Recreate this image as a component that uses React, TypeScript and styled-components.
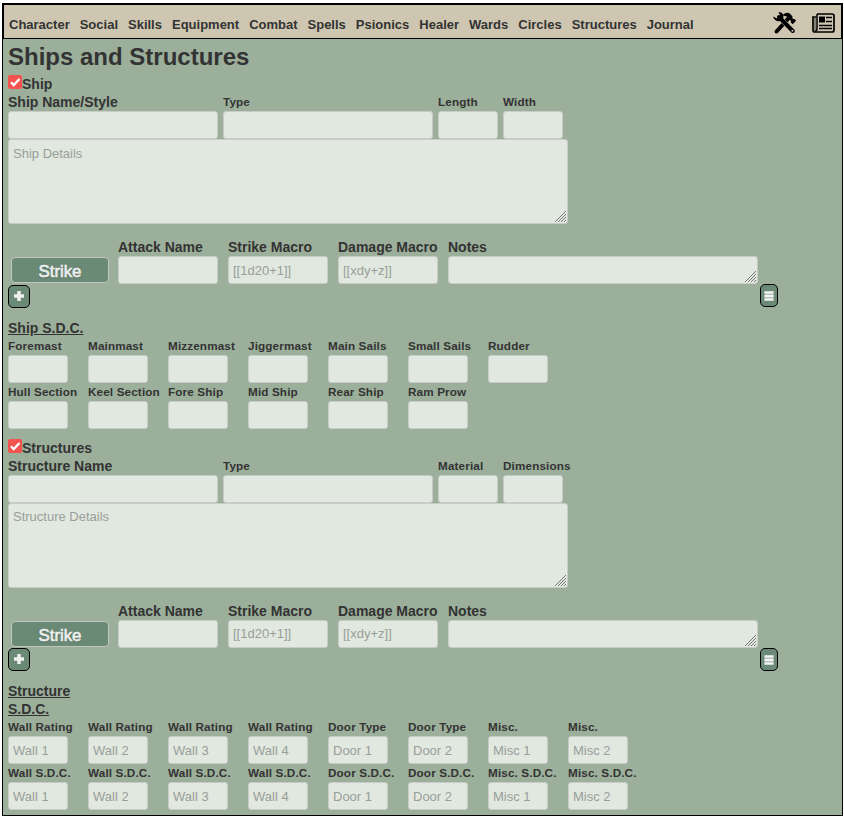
import React from "react";
import styled, { createGlobalStyle } from "styled-components";

const Global = createGlobalStyle`
  *, *::before, *::after { box-sizing: border-box; }
  body { margin: 0; background: #fff; color: #333; font: bold 14px/18px "Liberation Sans", Arial, sans-serif; }
`;
const Sheet = styled.main`
  width: 841px;
  height: 813px;
  margin: 3px 0 0 2px;
  border: 1px solid #000;
  background: #9caf9b;
`;
const Header = styled.header`
  display: flex;
  align-items: center;
  height: 35px;
  border: 1px solid #000;
  padding: 6px 6px 0 5px;
  background: #cec6b0;
  font-size: 13px;
`;
const Nav = styled.nav`
  display: flex;
  gap: 10px;
  flex: 1;
  padding-top: 1px;
`;
const Tab = styled.a`
  white-space: nowrap;
`;
const HeaderIcons = styled.div`
  display: flex;
  align-items: center;
  gap: 15px;
  height: 24px;
  margin-top: -4px;
  color: #000;
  svg { display: block; }
`;
const Content = styled.div`
  padding: 0 5px;
`;
const Title = styled.h1`
  margin: 0;
  height: 36px;
  font-size: 24px;
  line-height: 36px;
`;
const Section = styled.section<{ $height: number }>`
  height: ${(p) => p.$height}px;
`;
const Toggle = styled.label`
  display: flex;
  height: 18px;
`;
const Check = styled.span`
  width: 14px;
  height: 14px;
  border-radius: 2px;
  background: #f4544f;
  svg { display: block; }
`;
const Row = styled.div<{ $gap: number }>`
  display: flex;
  gap: ${(p) => p.$gap}px;
`;
const Field = styled.label<{ $w: number; $small?: boolean }>`
  display: block;
  width: ${(p) => p.$w}px;
  flex: none;
  white-space: nowrap;
  font-size: ${(p) => (p.$small ? 11.7 : 14)}px;
  letter-spacing: ${(p) => (p.$small ? 0.14 : 0)}px;
`;
const Input = styled.input`
  display: block;
  width: 100%;
  height: 28px;
  padding: 4px;
  border: 1px solid #c8cbc8;
  border-radius: 3px;
  background: #e1e8e0;
  color: #555;
  font: 13px/18px "Liberation Sans", Arial, sans-serif;
  letter-spacing: 0;
  &::placeholder { color: #999e99; opacity: 1; }
`;
const Area = styled(Input).attrs({ as: "textarea" })<{ $w: number; $h: number }>`
  width: ${(p) => p.$w}px;
  height: ${(p) => p.$h}px;
  padding: 4.6px 4px;
  resize: both;
  overflow: auto;
  &::-webkit-resizer {
    background: linear-gradient(135deg, transparent 7.2px, #777 7.2px 8.2px, transparent 8.2px 9.3px, #777 9.3px 10.3px, transparent 10.3px 11.4px, #777 11.4px 12.4px, transparent 12.4px 13.5px, #777 13.5px 14.5px, transparent 14.5px) right 1px bottom 1px / 11px 11px no-repeat;
  }
`;
const AttackRow = styled.div`
  display: flex;
  gap: 10px;
  margin-top: 14px;
`;
const Strike = styled.button`
  width: 98px;
  height: 26px;
  margin: 19px -1px 0 3px;
  padding: 3px 0 0;
  border: 1px solid #bfc7bf;
  border-radius: 4px;
  background: #6b8a76;
  color: #eee;
  font: 16.8px/22px "Liberation Sans", Arial, sans-serif;
  -webkit-text-stroke: 0.6px #eee;
  text-shadow: 0 1px 2px #52695a;
`;
const Controls = styled.div`
  display: flex;
  justify-content: space-between;
  width: 770px;
`;
const IconButton = styled.button<{ $w: number; $top?: number }>`
  display: flex;
  align-items: center;
  justify-content: center;
  width: ${(p) => p.$w}px;
  height: 23px;
  margin-top: ${(p) => p.$top ?? 0}px;
  padding: ${(p) => (p.$top ? "0 0 1px" : "1px 0 0")};
  border: 1px solid #000;
  border-radius: 5px;
  background: #6b8a76;
  color: #eee;
`;
const Subheading = styled.h2`
  width: 80px;
  margin: 0;
  padding-top: 11px;
  font-size: 14px;
  line-height: 18px;
  text-decoration: underline;
`;

const ToolsIcon = () => (
  <svg width="24" height="24" viewBox="0 0 24 24">
    <path d="M3.5 20.5 15 8" stroke="currentColor" strokeWidth="4" strokeLinecap="round" />
    <path d="m6 6 14 14" stroke="#cec6b0" strokeWidth="5" />
    <path d="m6 6 13.8 14" stroke="currentColor" strokeWidth="4" strokeLinecap="round" />
    <path fill="currentColor" d="M5.5 1c4 .2 6 3 4.5 7L8 10C4 11 1 9 0 5.5l4 2 2.7-1.2V3.5z" />
    <path fill="currentColor" d="M9.5 4.3C12 1.5 15 1 17.5 3.3l2 2.2-.2 1.6 1 1 1.3-.2L23 9.7l-3.3 3.5-1.9-1.8.2-1.5-1.5-1.4-2.5 2.2-2-2.4 2.3-2.5z" />
    <circle cx="19.4" cy="19.8" r="1" fill="#cec6b0" />
  </svg>
);
const NewsIcon = () => (
  <svg width="23" height="20" viewBox="0 0 23 20" fill="none" stroke="currentColor">
    <path d="M5 1h15q2 0 2 2v14q0 2-2 2H3q-2 0-2-2V4h3.5" strokeWidth="1.7" />
    <path d="M5 1v15q0 2-2 2" strokeWidth="1.5" />
    <path d="M3 5v12" strokeWidth=".7" />
    <path d="M7 3.5h6v6H7z" fill="currentColor" stroke="none" />
    <path d="M14 4.5h6M14 8.5h6M7 12.5h13M7 15.5h13" strokeWidth="1.4" />
  </svg>
);
const CheckIcon = () => (
  <svg width="14" height="14" viewBox="0 0 14 14">
    <path d="m3 7.3 2.7 2.8L11.5 4" fill="none" stroke="#fff" strokeWidth="2.3" />
  </svg>
);
const PlusIcon = () => (
  <svg width="12" height="12" viewBox="0 0 12 12">
    <path d="M6 1v10M1 6h10" stroke="currentColor" strokeWidth="3.5" />
  </svg>
);
const ListIcon = () => (
  <svg width="10" height="10" viewBox="0 0 10 10">
    <path fill="#b5c3ba" d="M.5 0h9v10h-9z" />
    <path d="M.5 1.5h9M.5 5h9M.5 8.5h9" stroke="#f2f3f2" strokeWidth="2" />
  </svg>
);

const tabs = ["Character", "Social", "Skills", "Equipment", "Combat", "Spells", "Psionics", "Healer", "Wards", "Circles", "Structures", "Journal"];
const shipParts = [
  ["Foremast", "Mainmast", "Mizzenmast", "Jiggermast", "Main Sails", "Small Sails", "Rudder"],
  ["Hull Section", "Keel Section", "Fore Ship", "Mid Ship", "Rear Ship", "Ram Prow"],
];
const structureParts = ["Wall 1", "Wall 2", "Wall 3", "Wall 4", "Door 1", "Door 2", "Misc 1", "Misc 2"];
const partKind = (part: string) => part.replace(/ \d/, "").replace("Misc", "Misc.");
const ratingLabel = (part: string) => {
  const kind = partKind(part);
  return kind === "Wall" ? "Wall Rating" : kind === "Door" ? "Door Type" : kind;
};

function Details({ toggle, labels, placeholder }: { toggle: string; labels: string[]; placeholder: string }) {
  return (
    <>
      <Toggle><Check><CheckIcon /></Check>{toggle}</Toggle>
      <Row $gap={5}>
        {labels.map((label, i) => (
          <Field key={label} $w={i < 2 ? 210 : 60} $small={i > 0}>{label}<Input /></Field>
        ))}
      </Row>
      <Area $w={560} $h={85} placeholder={placeholder} />
    </>
  );
}

function Attacks() {
  return (
    <>
      <AttackRow>
        <Strike>Strike</Strike>
        <Field $w={100}>Attack Name<Input /></Field>
        <Field $w={100}>Strike Macro<Input placeholder="[[1d20+1]]" /></Field>
        <Field $w={100}>Damage Macro<Input placeholder="[[xdy+z]]" /></Field>
        <Field $w={310}>Notes<Area $w={310} $h={28} /></Field>
      </AttackRow>
      <Controls>
        <IconButton $w={22} $top={0.8} aria-label="Add attack"><PlusIcon /></IconButton>
        <IconButton $w={18} aria-label="Modify attacks"><ListIcon /></IconButton>
      </Controls>
    </>
  );
}

export default function App() {
  return (
    <>
      <Global />
      <Sheet>
        <Header>
          <Nav>{tabs.map((tab) => <Tab key={tab}>{tab}</Tab>)}</Nav>
          <HeaderIcons><ToolsIcon /><NewsIcon /></HeaderIcons>
        </Header>
        <Content>
          <Title>Ships and Structures</Title>
          <Section $height={363.6}>
            <Details toggle="Ship" labels={["Ship Name/Style", "Type", "Length", "Width"]} placeholder="Ship Details" />
            <Attacks />
            <Subheading>Ship S.D.C.</Subheading>
            {shipParts.map((parts) => (
              <Row key={parts[0]} $gap={20}>
                {parts.map((part) => <Field key={part} $w={60} $small>{part}<Input /></Field>)}
              </Row>
            ))}
          </Section>
          <Section $height={371}>
            <Details toggle="Structures" labels={["Structure Name", "Type", "Material", "Dimensions"]} placeholder="Structure Details" />
            <Attacks />
            <Subheading>Structure S.D.C.</Subheading>
            <Row $gap={20}>
              {structureParts.map((part) => <Field key={part} $w={60} $small>{ratingLabel(part)}<Input placeholder={part} /></Field>)}
            </Row>
            <Row $gap={20}>
              {structureParts.map((part) => <Field key={part} $w={60} $small>{partKind(part)} S.D.C.<Input placeholder={part} /></Field>)}
            </Row>
          </Section>
        </Content>
      </Sheet>
    </>
  );
}
